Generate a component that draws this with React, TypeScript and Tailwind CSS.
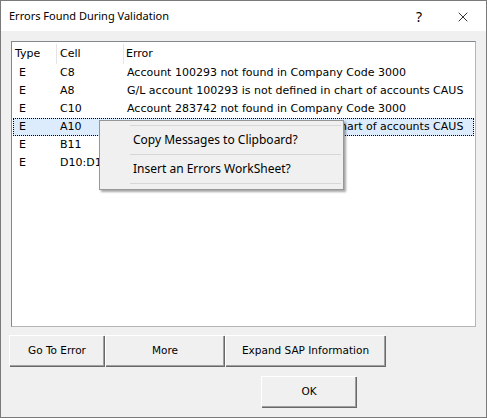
import { X } from "lucide-react";

const rows = [
  { type: "E", cell: "C8", error: "Account 100293 not found in Company Code 3000" },
  { type: "E", cell: "A8", error: "G/L account 100293 is not defined in chart of accounts CAUS" },
  { type: "E", cell: "C10", error: "Account 283742 not found in Company Code 3000" },
  { type: "E", cell: "A10", error: "G/L account 283742 is not defined in chart of accounts CAUS" },
  { type: "E", cell: "B11", error: "" },
  { type: "E", cell: "D10:D1", error: "" },
];

const list = "font-['DejaVu_Sans',sans-serif] text-[11px] text-black";
const btn =
  "flex items-center justify-center bg-[#f0f0f0] text-[10.5px] text-black font-['DejaVu_Sans',sans-serif] border-t border-l border-white shadow-[inset_-1px_-1px_0_#a0a0a0,1px_1px_0_#696969]";

export default function App() {
  return (
    <div className="w-[487px] h-[418px] flex flex-col border border-[#7a7a7a] bg-[#f0f0f0] font-['Noto_Sans',sans-serif]">
      {/* Title bar */}
      <div className="h-[30px] bg-white flex items-center pl-[8px] pt-[1px]">
        <span className="text-[11px] text-black">Errors Found During Validation</span>
        <span className="ml-auto w-[10px] text-[14px] text-black mr-[29px]">?</span>
        <X className="w-[16px] h-[16px] mr-[15px] text-black" strokeWidth={1.2} />
      </div>

      {/* Body */}
      <div className="flex-1 flex flex-col px-[8px] pt-[10px]">
        <div className="relative ml-[2px] w-[465px] h-[286px] bg-white border border-t-[#828790] border-l-[#828790] border-r-[#b5b5b5] border-b-[#b5b5b5]">
          <div className={`flex h-[22px] items-center pt-[2px] ${list}`}>
            <div className="w-[45px] h-full flex items-center pl-[3px] border-r border-[#e5e5e5]">Type</div>
            <div className="w-[67px] h-full flex items-center pl-[3px] border-r border-[#e5e5e5]">Cell</div>
            <div className="flex-1 pl-[2px]">Error</div>
          </div>
          {rows.map((r, i) => (
            <div
              key={i}
              className={`flex h-[18px] items-center ${list} ${
                i === 3 ? "ml-[1px] mr-[1px] bg-[#dcecfc] outline outline-1 outline-dotted outline-black -outline-offset-1" : ""
              }`}
            >
              <div className={`${i === 3 ? "w-[44px] pl-[6px]" : "w-[45px] pl-[7px]"}`}>{r.type}</div>
              <div className="w-[67px] pl-[3px]">{r.cell}</div>
              <div className="flex-1 pl-[3px] whitespace-nowrap">{r.error}</div>
            </div>
          ))}

          {/* Context menu */}
          <div className="absolute left-[87px] top-[78px] w-[245px] h-[70px] bg-[#f0f0f0] border border-[#979797] shadow-[2px_2px_2px_rgba(0,0,0,0.35)] flex flex-col pt-[4px] font-['Noto_Sans',sans-serif] text-[12px] text-black">
            <div className="ml-[30px] mr-[2px] border-t border-[#d7d7d7]" />
            <div className="h-[28px] flex items-center pl-[33px]">Copy Messages to Clipboard?</div>
            <div className="ml-[30px] mr-[2px] border-t border-[#d7d7d7]" />
            <div className="h-[28px] flex items-center pl-[33px]">Insert an Errors WorkSheet?</div>
            <div className="ml-[30px] mr-[2px] border-t border-[#d7d7d7]" />
          </div>
        </div>

        {/* Buttons */}
        <div className="flex mt-[8px] h-[31px]">
          <button className={`${btn} w-[95px]`}>Go To Error</button>
          <button className={`${btn} w-[119px] ml-[1px]`}>More</button>
          <button className={`${btn} w-[160px] ml-[1px]`}>Expand SAP Information</button>
        </div>
        <div className="flex mt-[10px] h-[31px]">
          <button className={`${btn} w-[95px] ml-[252px]`}>OK</button>
        </div>
      </div>
    </div>
  );
}
